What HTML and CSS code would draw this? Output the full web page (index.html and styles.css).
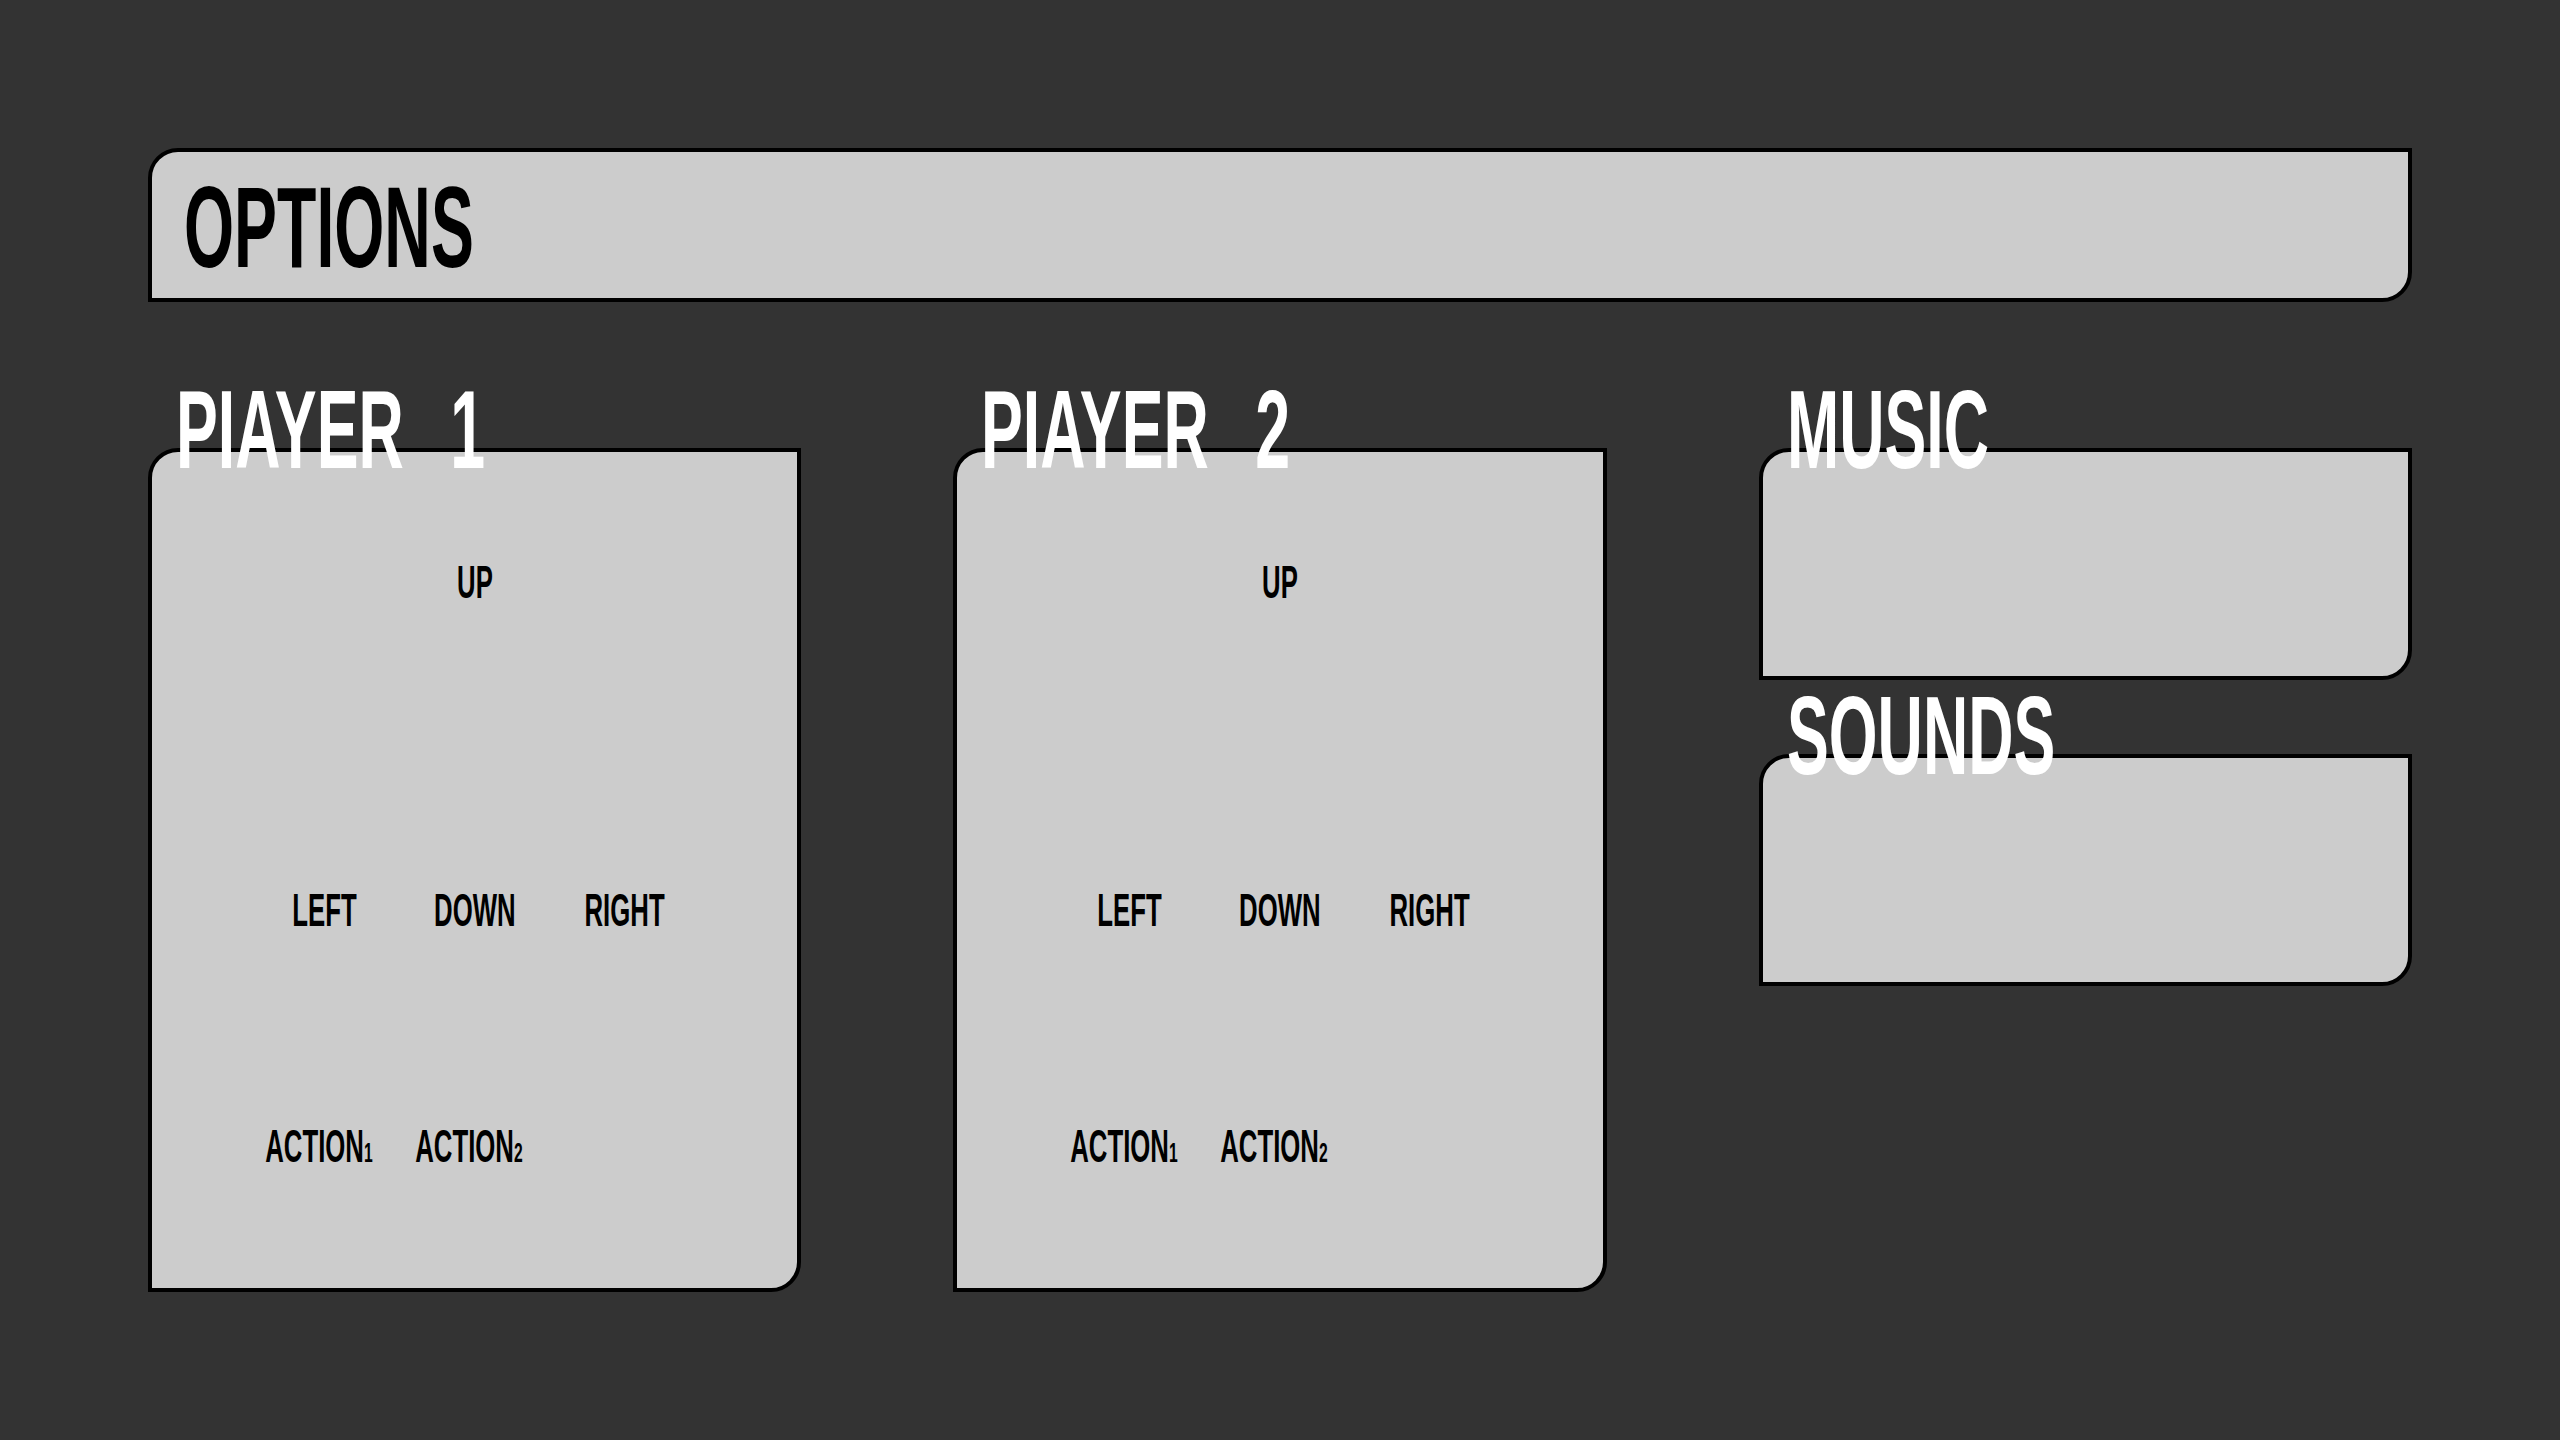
FILE: index.html
```html
<!DOCTYPE html>
<html lang="en">
<head>
  <meta charset="UTF-8" />
  <title>Options</title>
  <link rel="stylesheet" href="styles.css">
</head>
<body>
  <div class="page">
    <!-- TITLE -->
    <header class="title-bar">
      <h1 class="squeeze">OPTIONS</h1>
    </header>

    <!-- SETTINGS -->
    <main class="columns">
      <section class="group">
        <h2 class="group-label"><span class="squeeze">PIAYER 1</span></h2>
        <div class="panel panel-tall">
          <div class="keys">
            <span class="key up"><span class="squeeze">UP</span></span>
            <span class="key left"><span class="squeeze">LEFT</span></span>
            <span class="key down"><span class="squeeze">DOWN</span></span>
            <span class="key right"><span class="squeeze">RIGHT</span></span>
            <span class="key act1"><span class="squeeze">ACTION<small>1</small></span></span>
            <span class="key act2"><span class="squeeze">ACTION<small>2</small></span></span>
          </div>
        </div>
      </section>

      <section class="group">
        <h2 class="group-label"><span class="squeeze">PIAYER 2</span></h2>
        <div class="panel panel-tall">
          <div class="keys">
            <span class="key up"><span class="squeeze">UP</span></span>
            <span class="key left"><span class="squeeze">LEFT</span></span>
            <span class="key down"><span class="squeeze">DOWN</span></span>
            <span class="key right"><span class="squeeze">RIGHT</span></span>
            <span class="key act1"><span class="squeeze">ACTION<small>1</small></span></span>
            <span class="key act2"><span class="squeeze">ACTION<small>2</small></span></span>
          </div>
        </div>
      </section>

      <section class="group">
        <h2 class="group-label"><span class="squeeze">MUSIC</span></h2>
        <div class="panel panel-short"></div>
        <h2 class="group-label"><span class="squeeze">SOUNDS</span></h2>
        <div class="panel panel-short"></div>
      </section>
    </main>
  </div>
</body>
</html>
```
FILE: styles.css
```css
/* GLOBAL */
* { box-sizing:border-box; }
body { margin:0; padding:0; background:#333; color:#000;
  font-family:'Liberation Sans', Arial, sans-serif; font-weight:700; }
.page { padding:148px 148px 0; }
h1, h2 { margin:0; font-weight:700; }

/* condensed look: the font is squeezed sideways */
.squeeze { display:inline-block; transform:scaleX(0.56); transform-origin:left center; white-space:nowrap; }

/* TITLE */
.title-bar { height:154px; background:#ccc; border:4px solid #000; border-radius:30px 0 30px 0;
  padding:18px 0 0 32px; }
.title-bar h1 { font-size:115px; line-height:1; }

/* COLUMNS */
.columns { display:grid; grid-template-columns:repeat(3, 1fr); column-gap:152px; margin-top:72px; }
.group { display:flex; flex-direction:column; }
.group-label { position:relative; z-index:1; font-size:112px; line-height:1; height:112px;
  margin-bottom:-38px; padding-left:28px; color:#fff; word-spacing:52px; }

.panel { background:#ccc; border:4px solid #000; border-radius:30px 0 30px 0; }
.panel-tall { height:844px; }
.panel-short { height:232px; }

/* KEY GRID */
.keys { display:grid; grid-template-columns:repeat(3, 150px); grid-template-rows:328px 236px 46px;
  justify-content:center; padding-top:107px; font-size:46px; line-height:1; }
.key { justify-self:center; }
.key .squeeze { transform-origin:center center; }
.key small { font-size:28px; }
.up    { grid-column:2; grid-row:1; }
.left  { grid-column:1; grid-row:2; }
.down  { grid-column:2; grid-row:2; }
.right { grid-column:3; grid-row:2; }
.act1  { grid-column:1; grid-row:3; margin-right:12px; }
.act2  { grid-column:2; grid-row:3; margin-right:12px; }
```
